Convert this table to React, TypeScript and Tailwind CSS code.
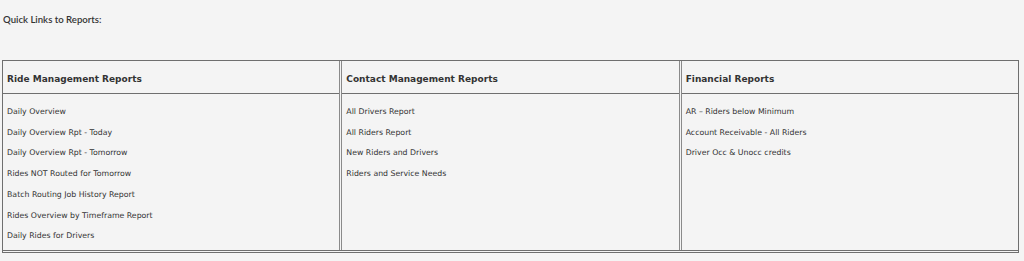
const reportGroups = [
  {
    title: "Ride Management Reports",
    links: [
      "Daily Overview",
      "Daily Overview Rpt - Today",
      "Daily Overview Rpt - Tomorrow",
      "Rides NOT Routed for Tomorrow",
      "Batch Routing Job History Report",
      "Rides Overview by Timeframe Report",
      "Daily Rides for Drivers",
    ],
  },
  {
    title: "Contact Management Reports",
    links: ["All Drivers Report", "All Riders Report", "New Riders and Drivers", "Riders and Service Needs"],
  },
  {
    title: "Financial Reports",
    links: ["AR – Riders below Minimum", "Account Receivable - All Riders", "Driver Occ & Unocc credits"],
  },
]

function ReportColumn({ title, links, first }: { title: string; links: string[]; first: boolean }) {
  return (
    <div className={first ? "flex flex-1 flex-col" : "flex flex-1 flex-col border-l-[3px] border-double border-[#8a8a8a]"}>
      <div className="flex h-[33px] items-center border-b border-[#6f6f6f] pl-[4px] pt-[5px] text-[9px] font-bold text-[#333]">
        {title}
      </div>
      <ul className="flex flex-col pb-[3px] pl-[4px] pt-[8px] text-[7.8px] text-[#333]">
        {links.map(link => (
          <li key={link} className="leading-[20.7px]">
            <a href="#" title={link}>{link}</a>
          </li>
        ))}
      </ul>
    </div>
  )
}

export default function App() {
  return (
    <div className="h-[261px] w-[1024px] bg-[#f4f4f4] pt-[13px] font-['DejaVu_Sans',sans-serif]">
      <div className="pl-[3px] font-['Lato',sans-serif] text-[9.6px] font-semibold leading-[14px] text-[#333]">
        Quick Links to Reports:
      </div>
      <div className="ml-[2px] mt-[33px] flex w-[1017px] border border-b-[3px] border-double border-[#6f6f6f]">
        {reportGroups.map((group, i) => (
          <ReportColumn key={group.title} title={group.title} links={group.links} first={i == 0} />
        ))}
      </div>
    </div>
  )
}
